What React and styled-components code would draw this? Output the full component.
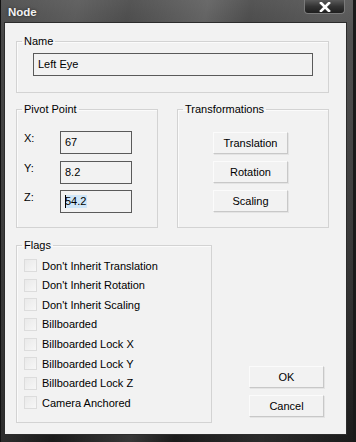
import React from "react";
import styled, { createGlobalStyle } from "styled-components";

const GlobalStyle = createGlobalStyle`
  html, body {
    margin: 0;
    padding: 0;
    background: #151515;
  }
  body {
    font-family: "Liberation Sans", Arial, sans-serif;
    font-size: 11px;
  }
`;

const flags = [
  "Don't Inherit Translation",
  "Don't Inherit Rotation",
  "Don't Inherit Scaling",
  "Billboarded",
  "Billboarded Lock X",
  "Billboarded Lock Y",
  "Billboarded Lock Z",
  "Camera Anchored",
];

export default function App() {
  return (
    <>
      <GlobalStyle />
      <Window>
        <TitleBar>
          <Title>Node</Title>
          <CloseButton>
            <svg width="12" height="10" viewBox="0 0 12 10">
              <path
                d="M2 1 L10 9 M10 1 L2 9"
                stroke="#fff"
                strokeWidth="2.6"
                strokeLinecap="square"
              />
            </svg>
          </CloseButton>
        </TitleBar>
        <Client>
          <Group $width={313} $height={58}>
            <Legend>Name</Legend>
            <NameInput>Left Eye</NameInput>
          </Group>

          <Row>
            <Group $width={142} $height={125}>
              <Legend>Pivot Point</Legend>
              <PivotGrid>
                <AxisLabel>X:</AxisLabel>
                <Field>67</Field>
                <AxisLabel>Y:</AxisLabel>
                <Field>8.2</Field>
                <AxisLabel>Z:</AxisLabel>
                <Field>
                  <Caret />
                  <Selected>54.2</Selected>
                </Field>
              </PivotGrid>
            </Group>
            <Group $width={152} $height={125}>
              <Legend>Transformations</Legend>
              <ButtonStack>
                <Button>Translation</Button>
                <Button>Rotation</Button>
                <Button>Scaling</Button>
              </ButtonStack>
            </Group>
          </Row>

          <BottomRow>
            <Group $width={196} $height={184}>
              <Legend>Flags</Legend>
              <FlagList>
                {flags.map((f) => (
                  <FlagRow key={f}>
                    <Check />
                    <span>{f}</span>
                  </FlagRow>
                ))}
              </FlagList>
            </Group>
            <DialogButtons>
              <Button>OK</Button>
              <Button>Cancel</Button>
            </DialogButtons>
          </BottomRow>
        </Client>
      </Window>
    </>
  );
}

const Window = styled.div`
  width: 356px;
  height: 442px;
  box-sizing: border-box;
  display: flex;
  flex-direction: column;
  padding: 0 9px 7px 4px;
  background:
    linear-gradient(100deg, rgba(255,255,255,0) 0%, rgba(255,255,255,0.08) 18%, rgba(255,255,255,0) 30%, rgba(255,255,255,0.12) 48%, rgba(255,255,255,0) 58%, rgba(255,255,255,0.07) 78%, rgba(255,255,255,0) 100%),
    linear-gradient(180deg, #565656 0%, #474747 8%, #3a3a3a 40%, #2a2a2a 75%, #1b1b1b 100%);
  box-shadow: inset 1px 0 0 #111, inset -3px 0 0 #1a1a1a;
`;

const TitleBar = styled.div`
  height: 22px;
  flex-shrink: 0;
  display: flex;
  justify-content: space-between;
  align-items: flex-start;
`;

const Title = styled.div`
  padding: 5px 0 0 4px;
  line-height: 14px;
  font-size: 11.5px;
  font-weight: bold;
  color: #f2f2f2;
  text-shadow: 0 0 3px rgba(0, 0, 0, 0.6);
`;

const CloseButton = styled.div`
  width: 41px;
  height: 14px;
  box-sizing: border-box;
  margin-right: 2px;
  display: flex;
  align-items: center;
  justify-content: center;
  border: 1px solid #7a7a7a;
  border-top: none;
  border-radius: 0 0 4px 4px;
  background: linear-gradient(180deg, #5a5a5a 0%, #333 50%, #1e1e1e 100%);
`;

const Client = styled.div`
  flex: 1;
  box-sizing: border-box;
  border: 1px solid #2c2c2c;
  background: #f2f2f2;
  padding: 12px 0 0 11px;
  display: flex;
  flex-direction: column;
  color: #000;
`;

const Group = styled.fieldset`
  margin: 0;
  padding: 0;
  box-sizing: border-box;
  width: ${(p) => p.$width}px;
  height: ${(p) => p.$height}px;
  min-width: 0;
  border: 1px solid #d3d3d3;
  box-shadow: inset 1px 1px 0 #fbfbfb;
`;

const Legend = styled.legend`
  margin-left: 5px;
  padding: 0 2px;
  line-height: 13px;
  font-size: 11px;
`;

const NameInput = styled.div`
  margin: 5px 0 0 16px;
  width: 280px;
  height: 23px;
  box-sizing: border-box;
  border: 1px solid #5a5a5a;
  padding-left: 4px;
  line-height: 21px;
`;

const Row = styled.div`
  display: flex;
  gap: 19px;
  margin-top: 10px;
`;

const PivotGrid = styled.div`
  display: grid;
  grid-template-columns: 36px 72px;
  grid-auto-rows: 23px;
  row-gap: 6.5px;
  margin: 15px 0 0 7px;
`;

const AxisLabel = styled.div`
  line-height: 13px;
  padding-top: 1px;
`;

const Field = styled.div`
  box-sizing: border-box;
  border: 1px solid #5a5a5a;
  padding-left: 4px;
  line-height: 21px;
  display: flex;
  align-items: center;
`;

const Caret = styled.span`
  width: 1px;
  height: 13px;
  background: #000;
  margin-right: -1px;
  position: relative;
  z-index: 1;
`;

const Selected = styled.span`
  background: #cfe6f8;
  line-height: 13px;
  padding-right: 1px;
`;

const ButtonStack = styled.div`
  display: flex;
  flex-direction: column;
  gap: 7px;
  margin: 16px 0 0 35px;
`;

const Button = styled.button`
  width: 75px;
  height: 22px;
  box-sizing: border-box;
  padding: 0;
  font-family: "Liberation Sans", Arial, sans-serif;
  font-size: 11px;
  color: #000;
  background: #f2f2f2;
  border: 1px solid;
  border-color: #fbfbfb #c8c8c8 #c8c8c8 #fbfbfb;
  box-shadow: 1px 1px 0 #e4e4e4;
`;

const BottomRow = styled.div`
  display: flex;
  margin-top: 11px;
`;

const FlagList = styled.div`
  display: flex;
  flex-direction: column;
  margin: 4px 0 0 7px;
`;

const FlagRow = styled.div`
  height: 19.57px;
  display: flex;
  align-items: center;
  gap: 5px;
`;

const Check = styled.span`
  width: 13px;
  height: 13px;
  box-sizing: border-box;
  border: 1px solid #dcdcdc;
  background: linear-gradient(135deg, #e9e9e9, #f7f7f7);
`;

const DialogButtons = styled.div`
  display: flex;
  flex-direction: column;
  justify-content: flex-end;
  gap: 7px;
  margin-left: 37px;
  padding-bottom: 6px;
`;
